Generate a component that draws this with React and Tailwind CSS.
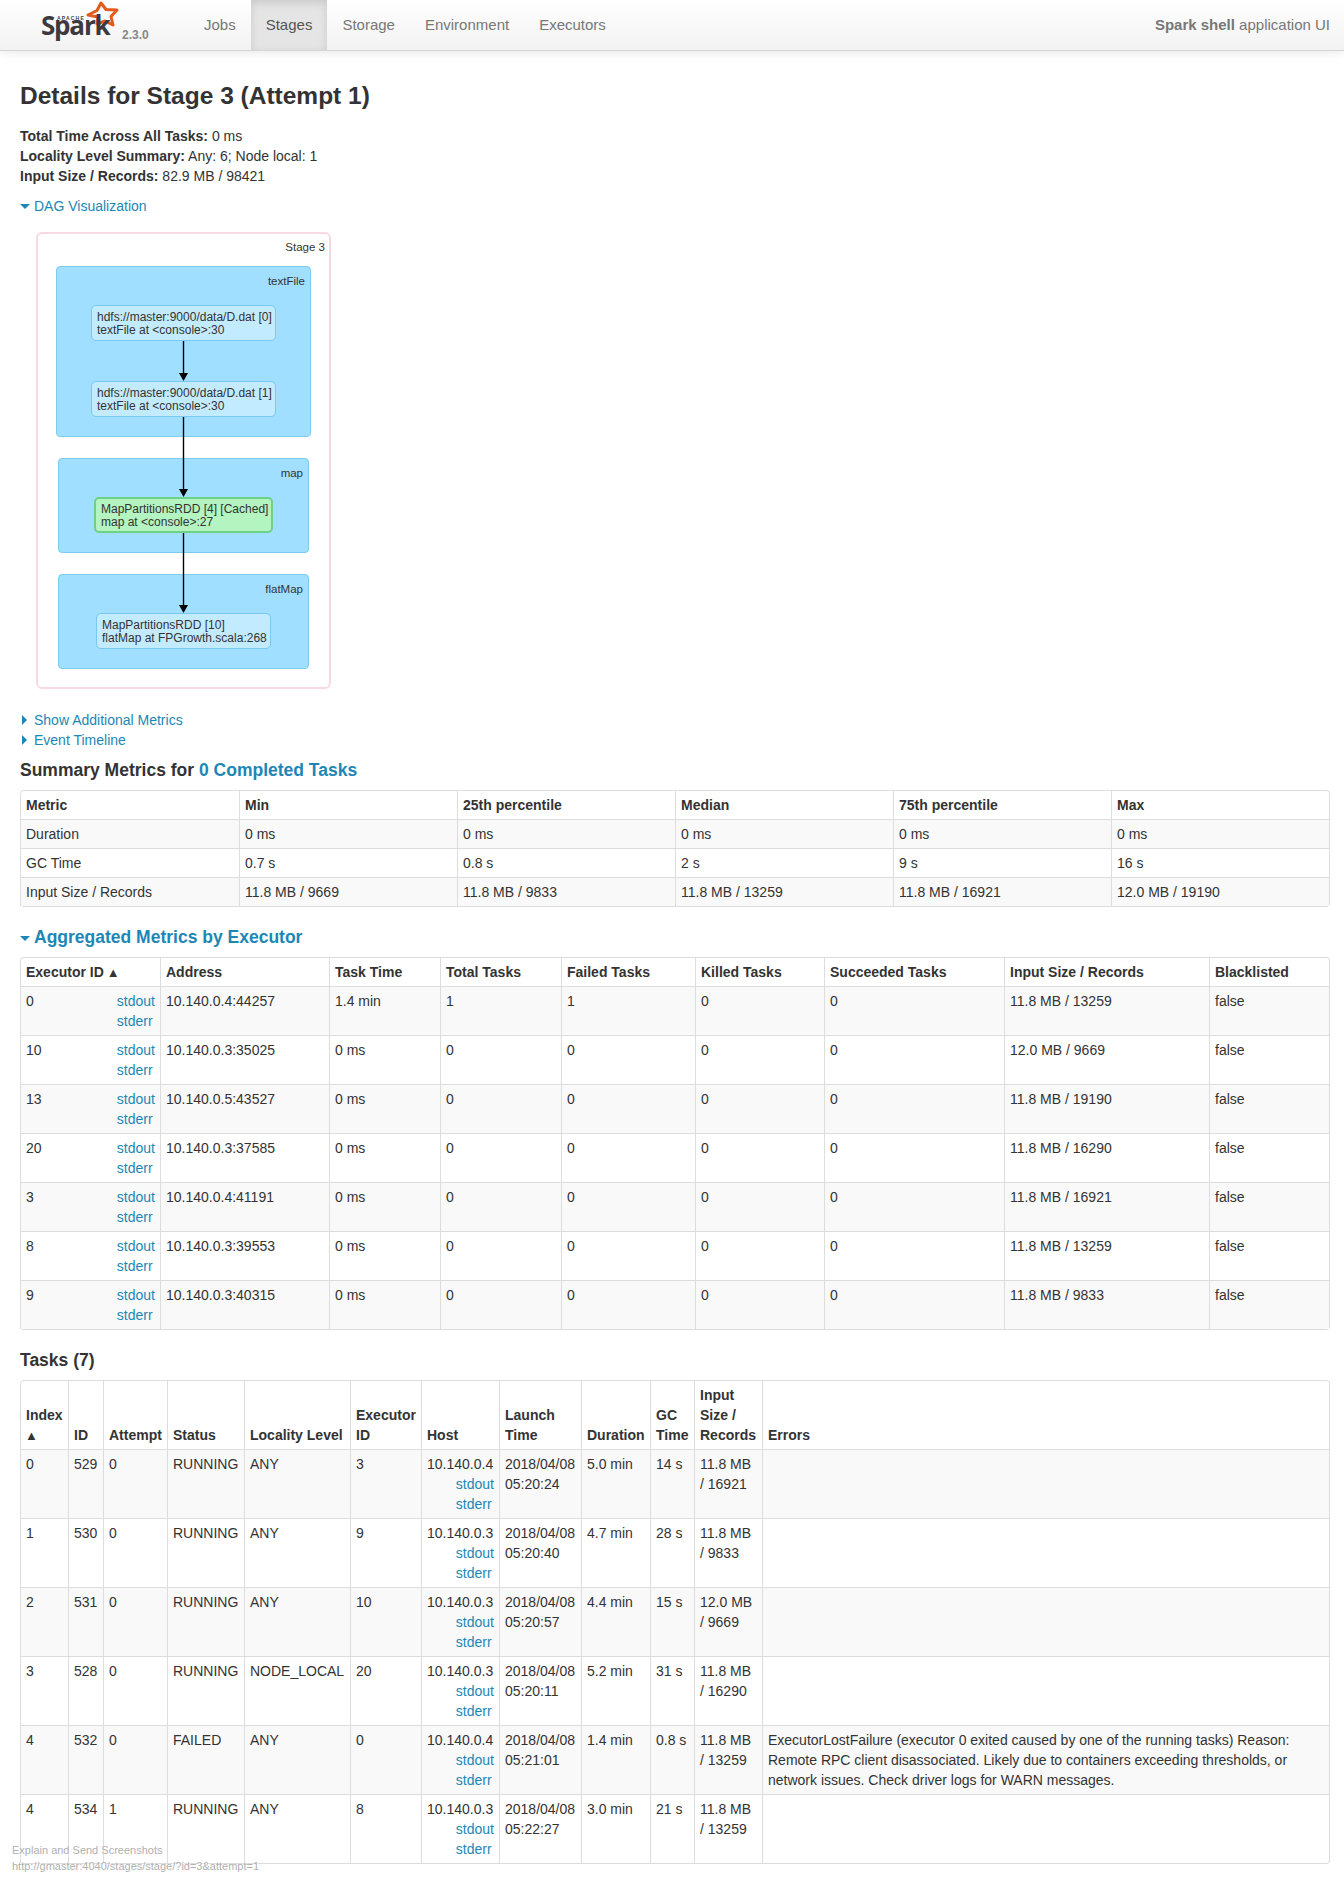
const summaryCols = ['w-[219px]', 'w-[218px]', 'w-[218px]', 'w-[218px]', 'w-[218px]', '']
const executorCols = ['w-[140px]', 'w-[169px]', 'w-[111px]', 'w-[121px]', 'w-[134px]', 'w-[129px]', 'w-[180px]', 'w-[205px]', '']
const taskCols = ['w-[48px]', 'w-[35px]', 'w-[64px]', 'w-[77px]', 'w-[106px]', 'w-[71px]', 'w-[78px]', 'w-[82px]', 'w-[69px]', 'w-[44px]', 'w-[68px]', '']

const summaryHead = ['Metric', 'Min', '25th percentile', 'Median', '75th percentile', 'Max']
const summaryRows = [
  ['Duration', '0 ms', '0 ms', '0 ms', '0 ms', '0 ms'],
  ['GC Time', '0.7 s', '0.8 s', '2 s', '9 s', '16 s'],
  ['Input Size / Records', '11.8 MB / 9669', '11.8 MB / 9833', '11.8 MB / 13259', '11.8 MB / 16921', '12.0 MB / 19190'],
]

const executorHead = [
  <>Executor ID <Sort /></>,
  'Address', 'Task Time', 'Total Tasks', 'Failed Tasks', 'Killed Tasks', 'Succeeded Tasks', 'Input Size / Records', 'Blacklisted',
]
const executors = [
  ['0', '10.140.0.4:44257', '1.4 min', '1', '1', '0', '0', '11.8 MB / 13259'],
  ['10', '10.140.0.3:35025', '0 ms', '0', '0', '0', '0', '12.0 MB / 9669'],
  ['13', '10.140.0.5:43527', '0 ms', '0', '0', '0', '0', '11.8 MB / 19190'],
  ['20', '10.140.0.3:37585', '0 ms', '0', '0', '0', '0', '11.8 MB / 16290'],
  ['3', '10.140.0.4:41191', '0 ms', '0', '0', '0', '0', '11.8 MB / 16921'],
  ['8', '10.140.0.3:39553', '0 ms', '0', '0', '0', '0', '11.8 MB / 13259'],
  ['9', '10.140.0.3:40315', '0 ms', '0', '0', '0', '0', '11.8 MB / 9833'],
]

const taskHead = [
  <>Index <Sort /></>,
  'ID', 'Attempt', 'Status', 'Locality Level', 'Executor ID', 'Host', 'Launch Time', 'Duration', 'GC Time', 'Input Size / Records', 'Errors',
]
const lostError =
  'ExecutorLostFailure (executor 0 exited caused by one of the running tasks) Reason: Remote RPC client disassociated. Likely due to containers exceeding thresholds, or network issues. Check driver logs for WARN messages.'
const tasks = [
  ['0', '529', '0', 'RUNNING', 'ANY', '3', '10.140.0.4', '05:20:24', '5.0 min', '14 s', '11.8 MB / 16921', ''],
  ['1', '530', '0', 'RUNNING', 'ANY', '9', '10.140.0.3', '05:20:40', '4.7 min', '28 s', '11.8 MB / 9833', ''],
  ['2', '531', '0', 'RUNNING', 'ANY', '10', '10.140.0.3', '05:20:57', '4.4 min', '15 s', '12.0 MB / 9669', ''],
  ['3', '528', '0', 'RUNNING', 'NODE_LOCAL', '20', '10.140.0.3', '05:20:11', '5.2 min', '31 s', '11.8 MB / 16290', ''],
  ['4', '532', '0', 'FAILED', 'ANY', '0', '10.140.0.4', '05:21:01', '1.4 min', '0.8 s', '11.8 MB / 13259', lostError],
  ['4', '534', '1', 'RUNNING', 'ANY', '8', '10.140.0.3', '05:22:27', '3.0 min', '21 s', '11.8 MB / 13259', ''],
]

function Sort() {
  return <span className="-ml-[1px] text-[13px] leading-[0]">▲</span>
}

function Link({ children, className = '' }) {
  return <a className={`text-[#1c87b5] ${className}`}>{children}</a>
}

function LogLinks() {
  return (
    <div className="float-right">
      <div><Link>stdout</Link></div>
      <div><Link>stderr</Link></div>
    </div>
  )
}

function ArrowOpen() {
  return <span className="mr-[4px] inline-block h-0 w-0 border-x-[5px] border-t-[5px] border-x-transparent border-t-[#1c87b5] align-[2px]" />
}

function ArrowClosed() {
  return <span className="ml-[2px] mr-[7px] inline-block h-0 w-0 border-y-[5px] border-l-[5px] border-y-transparent border-l-[#1c87b5] align-[0px]" />
}

function Table({ cols, head, rows, className = '' }) {
  return (
    <table className={`w-full table-fixed border-separate border-spacing-0 rounded-[4px] border border-l-0 border-[#ddd] ${className}`}>
      <colgroup>
        {cols.map((c, i) => (
          <col key={i} className={c} />
        ))}
      </colgroup>
      <thead>
        <tr>
          {head.map((h, i) => (
            <th key={i} className="border-l border-[#ddd] px-[5px] py-1 text-left align-bottom font-bold first:rounded-tl-[4px]">
              {h}
            </th>
          ))}
        </tr>
      </thead>
      <tbody>
        {rows.map((row, r) => (
          <tr key={r} className={r % 2 === 0 ? 'bg-[#f9f9f9]' : ''}>
            {row.map((cell, i) => (
              <td key={i} className="border-l border-t border-[#ddd] px-[5px] py-1 align-top">
                {cell}
              </td>
            ))}
          </tr>
        ))}
      </tbody>
    </table>
  )
}

function Group({ box, label }) {
  return (
    <div className={`absolute rounded-[4px] border border-[#7fcbee] bg-[#a0dfff] ${box}`}>
      <div className="absolute right-[5px] top-[7px] text-[11.5px] leading-[14px] text-[#333]">{label}</div>
    </div>
  )
}

function Node({ box, lines, cached }) {
  return (
    <div
      className={`absolute flex flex-col justify-center whitespace-nowrap rounded-[5px] pt-[2px] text-[12px] leading-[13px] text-[#333] ${box} ${
        cached ? 'border-2 border-[#6dd187] bg-[#b3f4c0]' : 'border border-[#78c8ef] bg-[#c3ebff]'
      }`}
    >
      {lines.map((l) => (
        <div key={l}>{l}</div>
      ))}
    </div>
  )
}

function DagGraph() {
  return (
    <div className="relative ml-4 mt-4 h-[457px] w-[295px] rounded-[6px] border-2 border-[#f8d9e2] bg-white">
      <div className="absolute right-[4px] top-[6px] text-[11.5px] leading-[14px] text-[#333]">Stage 3</div>
      <Group box="left-[18px] top-[32px] h-[171px] w-[255px]" label="textFile" />
      <Group box="left-[20px] top-[224px] h-[95px] w-[251px]" label="map" />
      <Group box="left-[20px] top-[340px] h-[95px] w-[251px]" label="flatMap" />
      <Node box="left-[53px] top-[71px] h-[36px] w-[185px] pl-[5px]" lines={['hdfs://master:9000/data/D.dat [0]', 'textFile at <console>:30']} />
      <Node box="left-[53px] top-[147px] h-[36px] w-[185px] pl-[5px]" lines={['hdfs://master:9000/data/D.dat [1]', 'textFile at <console>:30']} />
      <Node box="left-[56px] top-[263px] h-[36px] w-[179px] pl-[5px]" lines={['MapPartitionsRDD [4] [Cached]', 'map at <console>:27']} cached />
      <Node box="left-[58px] top-[379px] h-[36px] w-[175px] pl-[5px]" lines={['MapPartitionsRDD [10]', 'flatMap at FPGrowth.scala:268']} />
      <svg className="absolute left-0 top-0" width="291" height="453" viewBox="0 0 291 453">
        <g stroke="#000" strokeWidth="1.4" fill="none">
          <path d="M145.5 107V140" />
          <path d="M145.5 183V256" />
          <path d="M145.5 299V372" />
        </g>
        <g fill="#000">
          <path d="M141 139L150 139L145.5 147Z" />
          <path d="M141 255L150 255L145.5 263Z" />
          <path d="M141 371L150 371L145.5 379Z" />
        </g>
      </svg>
    </div>
  )
}

function SparkLogo() {
  return (
    <div className="relative h-[50px] w-[189px] shrink-0">
      <svg className="absolute left-[84px] top-0" width="38" height="28" viewBox="0 0 38 28">
        <path
          d="M17 3L22 9.5L33 10L27 16.5L29 25L21 21L13 24L14 17L4 15L13 10.5Z"
          fill="none"
          stroke="#e25a1c"
          strokeWidth="3"
          strokeLinejoin="round"
        />
      </svg>
      <div className="absolute left-[57px] top-[15px] text-[5px] font-bold leading-[6px] tracking-[1.2px] text-[#444]">APACHE</div>
      <div className="absolute left-[41px] top-[7px] font-['Open_Sans',sans-serif] text-[26px] font-bold leading-[36px] tracking-[-1.2px] text-[#3c3a3e]">
        Spark
      </div>
      <div className="absolute left-[122px] top-[28px] text-[12px] font-bold leading-[14px] text-[#888]">2.3.0</div>
    </div>
  )
}

function Header() {
  const items = ['Jobs', 'Stages', 'Storage', 'Environment', 'Executors']
  return (
    <header className="relative z-10 flex h-[51px] items-stretch border-b border-[#d4d4d4] bg-gradient-to-b from-white to-[#f2f2f2] pr-[14px] text-[15px] shadow-[0_1px_10px_rgba(0,0,0,0.1)]">
      <SparkLogo />
      <nav className="flex">
        {items.map((item) =>
          item === 'Stages' ? (
            <span key={item} className="flex items-center bg-[#e5e5e5] px-[15px] text-[#555] shadow-[inset_0_3px_8px_rgba(0,0,0,0.125)]">
              {item}
            </span>
          ) : (
            <span key={item} className="flex items-center px-[15px] text-[#777]">
              {item}
            </span>
          ),
        )}
      </nav>
      <div className="ml-auto flex items-center text-[#777]">
        <span><b>Spark shell</b> application UI</span>
      </div>
    </header>
  )
}

export default function App() {
  const executorRows = executors.map(([id, ...rest]) => [
    <>{id}<LogLinks /></>,
    ...rest,
    'false',
  ])
  const taskRows = tasks.map((t) =>
    t.map((cell, i) => {
      if (i === 6) return <>{cell}<LogLinks /></>
      if (i === 7) return <>2018/04/08 {cell}</>
      return cell
    }),
  )

  return (
    <div className="relative h-[1884px] overflow-hidden bg-white font-['Liberation_Sans',Arial,sans-serif] text-[14px] leading-[20px] text-[#333]">
      <Header />
      <main className="pl-5 pr-[14px]">
        <h3 className="mt-[25px] text-[24.5px] font-bold leading-[40px]">Details for Stage 3 (Attempt 1)</h3>
        <ul className="mt-[10px]">
          <li><b>Total Time Across All Tasks:</b> 0 ms</li>
          <li><b>Locality Level Summary:</b> Any: 6; Node local: 1</li>
          <li><b>Input Size / Records:</b> 82.9 MB / 98421</li>
        </ul>
        <div className="mt-[10px]">
          <ArrowOpen />
          <Link>DAG Visualization</Link>
        </div>
        <DagGraph />
        <div className="mt-[21px]">
          <ArrowClosed />
          <Link>Show Additional Metrics</Link>
        </div>
        <div>
          <ArrowClosed />
          <Link>Event Timeline</Link>
        </div>
        <h4 className="mt-[10px] text-[17.5px] font-bold leading-[20px]">
          Summary Metrics for <Link>0 Completed Tasks</Link>
        </h4>
        <Table className="mt-[10px]" cols={summaryCols} head={summaryHead} rows={summaryRows} />
        <h4 className="mt-[20px] text-[17.5px] font-bold leading-[20px]">
          <ArrowOpen />
          <Link>Aggregated Metrics by Executor</Link>
        </h4>
        <Table className="mt-[10px]" cols={executorCols} head={executorHead} rows={executorRows} />
        <h4 className="mt-[20px] text-[17.5px] font-bold leading-[20px]">Tasks (7)</h4>
        <Table className="mt-[10px]" cols={taskCols} head={taskHead} rows={taskRows} />
      </main>
      {/* browser extension overlay */}
      <div className="absolute left-[12px] top-[1843px] z-20 text-[11px] leading-[15.5px] text-[#b0b0b0] [text-shadow:1px_1px_0_#fff]">
        <div>Explain and Send Screenshots</div>
        <div>http://gmaster:4040/stages/stage/?id=3&attempt=1</div>
      </div>
    </div>
  )
}
